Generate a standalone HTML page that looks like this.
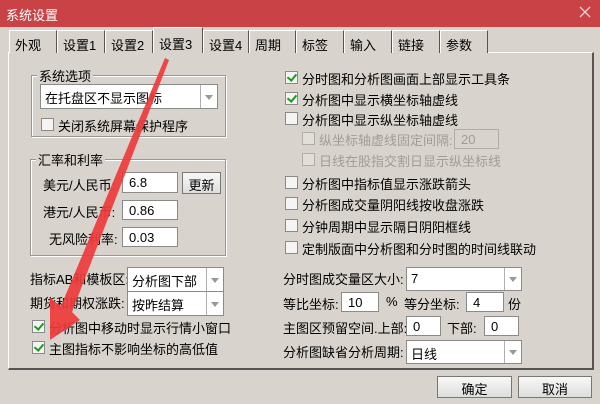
<!DOCTYPE html>
<html><head><meta charset="utf-8"><style>
*{box-sizing:border-box}
body{margin:0;width:600px;height:404px;background:#d8d4cd;font-family:"Liberation Sans","Noto Sans CJK SC",sans-serif;font-size:12px;color:#000;position:relative;overflow:hidden}
.a{position:absolute;white-space:nowrap}
.title{left:0;top:0;width:600px;height:27px;background:#c94346;color:#fff;font-size:13px;padding:5px 0 0 6px}
.tab{position:absolute;top:30px;height:23px;border:1px solid #fff;border-right:1px solid #555;border-bottom:none;padding:4px 0 0 5px;font-size:13px;background:#d8d4cd}
.panel{left:8px;top:52px;width:586px;height:318px;border:1px solid #fff;border-right:2px solid #555;border-bottom:2px solid #555}
.grp{border:1px solid #9a9690;box-shadow:1px 1px 0 #fff inset,1px 1px 0 #fff}
.gl{background:#d8d4cd;padding:0 2px}
.cb{position:absolute;width:13px;height:13px;border:1px solid #8a8a8a;background:#f4f4f4}
.cb.k::after{content:"";position:absolute;left:3px;top:0px;width:4px;height:7px;border:solid #1c9a1c;border-width:0 2px 2px 0;transform:rotate(40deg)}
.cb.d{border-color:#b0aca6;background:#e2dfda}
.inp{position:absolute;background:#fff;border:1px solid #8a8a8a;padding:2px 0 0 6px;font-size:13px}
.combo{position:absolute;background:#fff;border:1px solid #8a8a8a;padding:3px 0 0 4px;font-size:13px}
.combo::after{content:"";position:absolute;right:0;top:0;width:16px;height:100%;border-left:1px solid #b0b0b0;background:linear-gradient(#fff,#fff)}
.combo i{position:absolute;right:4px;top:50%;margin-top:-2px;border:4px solid transparent;border-top:5px solid #999;z-index:2;border-bottom:0}
.btn{position:absolute;border:1px solid #777;background:linear-gradient(#f8f8f8,#dedede);text-align:center;font-size:13px;padding-top:2px}
.dis{color:#a09c96}
</style></head><body>
<div class="a title">系统设置</div>
<svg class="a" style="left:578px;top:5px" width="14" height="14"><path d="M2 2L12 12M12 2L2 12" stroke="#f0d0d0" stroke-width="1.3"/></svg>
<div class="a panel"></div>
<div class="tab" style="left:9px;width:48px">外观</div>
<div class="tab" style="left:57px;width:48px">设置1</div>
<div class="tab" style="left:105px;width:48px">设置2</div>
<div class="tab" style="left:153px;top:27px;height:26px;width:50px;border-bottom:none;background:#d8d4cd;z-index:2;padding-top:6px">设置3</div>
<div class="tab" style="left:203px;width:46px">设置4</div>
<div class="tab" style="left:249px;width:47px">周期</div>
<div class="tab" style="left:296px;width:48px">标签</div>
<div class="tab" style="left:344px;width:48px">输入</div>
<div class="tab" style="left:392px;width:48px">链接</div>
<div class="tab" style="left:440px;width:48px">参数</div>

<div class="a grp" style="left:31px;top:75px;width:195px;height:62px"></div>
<div class="a gl" style="left:37px;top:66px;font-size:13px">系统选项</div>
<div class="combo" style="left:40px;top:84px;width:178px;height:25px">在托盘区不显示图标<i></i></div>
<div class="cb" style="left:41px;top:118px"></div>
<div class="a" style="left:58px;top:116px;font-size:13px">关闭系统屏幕保护程序</div>

<div class="a grp" style="left:30px;top:159px;width:196px;height:97px"></div>
<div class="a gl" style="left:36px;top:150px;font-size:13px">汇率和利率</div>
<div class="a" style="left:43px;top:175px;font-size:13px">美元/人民币:</div>
<div class="inp" style="left:122px;top:172px;width:56px;height:21px">6.8</div>
<div class="btn" style="left:182px;top:172px;width:39px;height:22px">更新</div>
<div class="a" style="left:43px;top:202px;font-size:13px">港元/人民币:</div>
<div class="inp" style="left:122px;top:200px;width:56px;height:20px">0.86</div>
<div class="a" style="left:49px;top:229px;font-size:13px">无风险利率:</div>
<div class="inp" style="left:122px;top:227px;width:56px;height:20px">0.03</div>

<div class="a" style="left:30px;top:269px;font-size:13px">指标AB和模板区:</div>
<div class="combo" style="left:127px;top:267px;width:97px;height:25px">分析图下部<i></i></div>
<div class="a" style="left:30px;top:293px;font-size:13px">期货和期权涨跌:</div>
<div class="combo" style="left:127px;top:291px;width:97px;height:25px">按昨结算<i></i></div>
<div class="cb k" style="left:32px;top:320px"></div>
<div class="a" style="left:49px;top:318px;font-size:13px">分析图中移动时显示行情小窗口</div>
<div class="cb k" style="left:32px;top:341px"></div>
<div class="a" style="left:49px;top:339px;font-size:13px">主图指标不影响坐标的高低值</div>

<div class="cb k" style="left:285px;top:71px"></div><div class="a" style="left:302px;top:69px;font-size:13px">分时图和分析图画面上部显示工具条</div>
<div class="cb k" style="left:285px;top:92px"></div><div class="a" style="left:302px;top:90px;font-size:13px">分析图中显示横坐标轴虚线</div>
<div class="cb" style="left:285px;top:112px"></div><div class="a" style="left:302px;top:110px;font-size:13px">分析图中显示纵坐标轴虚线</div>
<div class="cb d" style="left:302px;top:132px"></div><div class="a dis" style="left:319px;top:130px;font-size:13px">纵坐标轴虚线固定间隔:</div>
<div class="inp dis" style="left:454px;top:129px;width:45px;height:20px;background:#d8d4cd;border-color:#b0aca6">20</div>
<div class="cb d" style="left:302px;top:153px"></div><div class="a dis" style="left:319px;top:151px;font-size:13px">日线在股指交割日显示纵坐标线</div>
<div class="cb" style="left:285px;top:176px"></div><div class="a" style="left:302px;top:174px;font-size:13px">分析图中指标值显示涨跌箭头</div>
<div class="cb" style="left:285px;top:197px"></div><div class="a" style="left:302px;top:195px;font-size:13px">分析图成交量阴阳线按收盘涨跌</div>
<div class="cb" style="left:285px;top:219px"></div><div class="a" style="left:302px;top:217px;font-size:13px">分钟周期中显示隔日阴阳框线</div>
<div class="cb" style="left:285px;top:241px"></div><div class="a" style="left:302px;top:239px;font-size:13px">定制版面中分析图和分时图的时间线联动</div>

<div class="a" style="left:283px;top:269px;font-size:13px">分时图成交量区大小:</div>
<div class="combo" style="left:406px;top:267px;width:116px;height:24px">7<i></i></div>
<div class="a" style="left:283px;top:294px;font-size:13px">等比坐标:</div>
<div class="inp" style="left:341px;top:292px;width:38px;height:20px">10</div>
<div class="a" style="left:386px;top:294px;font-size:13px">%</div>
<div class="a" style="left:404px;top:294px;font-size:13px">等分坐标:</div>
<div class="inp" style="left:466px;top:292px;width:38px;height:20px">4</div>
<div class="a" style="left:508px;top:294px;font-size:13px">份</div>
<div class="a" style="left:283px;top:318px;font-size:13px">主图区预留空间.上部:</div>
<div class="inp" style="left:406px;top:316px;width:35px;height:20px">0</div>
<div class="a" style="left:447px;top:318px;font-size:13px">下部:</div>
<div class="inp" style="left:484px;top:316px;width:35px;height:20px">0</div>
<div class="a" style="left:283px;top:342px;font-size:13px">分析图缺省分析周期:</div>
<div class="combo" style="left:406px;top:340px;width:116px;height:24px">日线<i></i></div>

<div class="btn" style="left:437px;top:376px;width:75px;height:22px">确定</div>
<div class="btn" style="left:518px;top:376px;width:74px;height:22px">取消</div>

<svg class="a" style="left:0;top:0" width="600" height="404"><polygon points="165,58 169,60 72,312 80,320 50,340 50,298 61,306" fill="#ee3b3b" opacity="0.92"/></svg>
</body></html>
